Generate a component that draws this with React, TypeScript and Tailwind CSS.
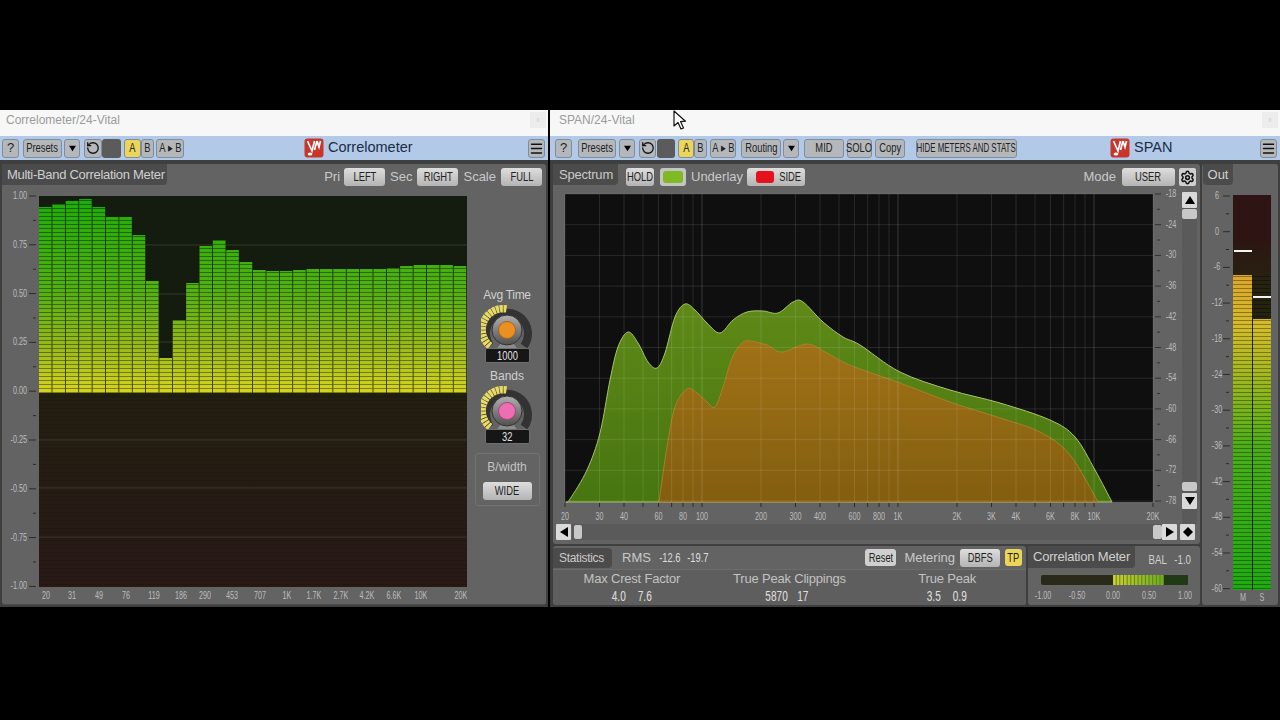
import React from "react";
import { Menu, RotateCcw, Settings } from "lucide-react";

// condensed label, the plugin font is much narrower than Arial
const Narrow = ({ children }: { children: React.ReactNode }) => (
  <span className="inline-block scale-x-[0.72] whitespace-nowrap">{children}</span>
);

const Tri = ({ dir = "down", size = 8 }: { dir?: "down" | "up" | "left" | "right" | "diamond"; size?: number }) => {
  const pts = {
    down: "0,1 10,1 5,9",
    up: "0,9 10,9 5,1",
    left: "9,0 9,10 1,5",
    right: "1,0 1,10 9,5",
    diamond: "5,0 10,5 5,10 0,5",
  }[dir];
  return (
    <svg width={size} height={size} viewBox="0 0 10 10">
      <polygon points={pts} fill="#000" />
    </svg>
  );
};

const ToolBtn = ({ w, label, on, mr = 0 }: { w: number; label?: React.ReactNode; on?: boolean; mr?: number }) => (
  <div
    style={{ width: w, marginRight: mr }}
    className={`h-[19px] shrink-0 rounded-[3px] border border-[#7d8c9e] flex items-center justify-center text-[13px] text-[#222] ${on ? "bg-[#ecd65a]" : "bg-[#b5b8bb]"}`}
  >
    {label}
  </div>
);

const PanelBtn = ({ w, label }: { w: number; label: string }) => (
  <div
    style={{ width: w }}
    className="h-[18px] shrink-0 rounded-[3px] bg-gradient-to-b from-[#dedede] to-[#b4b4b4] flex items-center justify-center text-[13px] text-[#222]"
  >
    <Narrow>{label}</Narrow>
  </div>
);

const TitleBar = ({ title, pad, children }: { title: string; pad: string; children?: React.ReactNode }) => (
  <div className={`relative h-[26px] bg-[#f7f7f7] flex items-start pt-[2px] pr-[2px] justify-between ${pad}`}>
    <span className="text-[12px] leading-[16px] text-[#9b9b9b]">{title}</span>
    <div className="w-[16px] h-[16px] bg-[#ececec] flex items-center justify-center text-[7px] text-[#ccc]">x</div>
    {children}
  </div>
);

const Logo = () => (
  <svg width="20" height="20" viewBox="0 0 20 20">
    <rect x="0.5" y="0.5" width="19" height="19" rx="3" fill="#c8352b" />
    <path d="M3.5 3 L8 13 L10.5 3 M13 3 L15 9 L16.5 3 M13 3 L10.5 12" stroke="#fff" strokeWidth="1.7" fill="none" />
    <ellipse cx="6" cy="16" rx="2.4" ry="1.6" fill="#fff" />
  </svg>
);

const Hamburger = () => (
  <div className="w-[17px] h-[19px] rounded-[3px] bg-[#b5b8bb] border border-[#7d8c9e] flex items-center justify-center">
    <Menu size={15} color="#111" strokeWidth={2.4} />
  </div>
);

const Label = ({ x, y, children, size = 10, anchor = "middle", fill = "#bdbdbd" }: {
  x: number; y: number; children: React.ReactNode; size?: number; anchor?: "middle" | "end" | "start"; fill?: string;
}) => (
  <text transform={`translate(${x} ${y}) scale(0.72 1)`} fontSize={size} textAnchor={anchor} fill={fill}>
    {children}
  </text>
);

/* ---------- Correlometer ---------- */

const BAND_TOPS = [
  207, 204, 201, 199, 207, 217, 217, 235, 281, 358, 320, 283, 246, 240, 250, 262, 270, 271, 271, 270, 269, 269, 269,
  269, 269, 269, 268, 266, 265, 265, 265, 266,
];
const LEFT_TICKS = ["1.00", "0.75", "0.50", "0.25", "0.00", "-0.25", "-0.50", "-0.75", "-1.00"];
const LEFT_FREQS: [string, number][] = [
  ["20", 46], ["31", 72], ["49", 99], ["76", 126], ["119", 154], ["186", 181], ["290", 205], ["453", 232],
  ["707", 260], ["1K", 287], ["1.7K", 314], ["2.7K", 341], ["4.2K", 367], ["6.6K", 394], ["10K", 421], ["20K", 461],
];

const CorrelationChart = () => (
  <svg width="472" height="415" viewBox="2 190 472 415" className="shrink-0">
    <defs>
      <linearGradient id="bars" gradientUnits="userSpaceOnUse" x1="0" y1="196" x2="0" y2="391">
        <stop offset="0" stopColor="#1cab08" />
        <stop offset="0.5" stopColor="#55b012" />
        <stop offset="0.78" stopColor="#9aba1a" />
        <stop offset="1" stopColor="#d4d41e" />
      </linearGradient>
      <linearGradient id="lower" x1="0" y1="0" x2="0" y2="1">
        <stop offset="0" stopColor="#231f10" />
        <stop offset="1" stopColor="#281917" />
      </linearGradient>
      <pattern id="stripes" width="4" height="4" patternUnits="userSpaceOnUse">
        <rect width="4" height="1" fill="#000" opacity="0.4" />
      </pattern>
    </defs>
    <rect x="39" y="196" width="428" height="195" fill="#141b0f" />
    <rect x="39" y="391" width="428" height="196" fill="url(#lower)" />
    <rect x="39" y="391" width="428" height="196" fill="url(#stripes)" opacity="0.3" />
    {[245, 294, 342, 440, 488, 537].map((y) => (
      <line key={y} x1="39" x2="467" y1={y} y2={y} stroke="#5c5c44" strokeWidth="1" opacity="0.45" />
    ))}
    {BAND_TOPS.map((top, i) => (
      <rect key={i} x={39 + i * 13.375} y={top} width="12.6" height={393 - top} fill="url(#bars)" />
    ))}
    {BAND_TOPS.map((top, i) => (
      <rect key={i} x={39 + i * 13.375} y={top} width="12.6" height={393 - top} fill="url(#stripes)" />
    ))}
    {LEFT_TICKS.map((t, i) => {
      const y = 196 + i * 48.8;
      return (
        <g key={t}>
          <Label x={27} y={y + 3} size={10} anchor="end">{t}</Label>
          <line x1="29" x2="36" y1={y} y2={y} stroke="#2c2c2c" />
          {i < 8 && <line x1="33" x2="36" y1={y + 24.4} y2={y + 24.4} stroke="#2c2c2c" />}
        </g>
      );
    })}
    {LEFT_FREQS.map(([t, x]) => (
      <Label key={t} x={x} y={599} size={10}>{t}</Label>
    ))}
  </svg>
);

const Knob = ({ color, edge }: { color: string; edge: string }) => (
  <svg width="52" height="50" viewBox="0 -4 52 50">
    <defs>
      <linearGradient id={`metal${edge}`} x1="0" y1="0" x2="0" y2="1">
        <stop offset="0" stopColor="#b0b0b0" />
        <stop offset="1" stopColor="#505050" />
      </linearGradient>
    </defs>
    <path d="M9 41 A21 21 0 1 1 43 41" fill="none" stroke="#333" strokeWidth="8" />
    <path d="M9 41 A21 21 0 0 1 26 4" fill="none" stroke="#e9da62" strokeWidth="7.5" strokeDasharray="3 0.7" />
    <path d="M14 46 L20 38 L32 38 L38 46 Z" fill="#8c8c8c" />
    <circle cx="26" cy="25" r="15" fill={`url(#metal${edge})`} stroke="#333" />
    <circle cx="26" cy="25" r="8.5" fill={color} stroke={edge} />
  </svg>
);

const ValueBox = ({ value }: { value: string }) => (
  <div className="w-[45px] h-[15px] shrink-0 rounded-[2px] bg-[#161616] border border-[#6e6e6e] flex items-center justify-center text-[13px] text-[#e2e2e2]">
    <Narrow>{value}</Narrow>
  </div>
);

const Correlometer = () => (
  <div className="w-[548px] shrink-0">
    <TitleBar title="Correlometer/24-Vital" pad="pl-[6px]" />
    <div className="h-[24px] bg-[#b2cae8] flex items-center pl-[2px] pr-[3px] relative">
      <ToolBtn w={17} label="?" mr={4} />
      <ToolBtn w={39} label={<Narrow>Presets</Narrow>} mr={2} />
      <ToolBtn w={16} label={<Tri size={7} />} mr={4} />
      <ToolBtn w={18} label={<RotateCcw size={14} color="#111" strokeWidth={2.2} />} />
      <div className="w-[19px] h-[19px] bg-[#5b5b5b] rounded-[3px] mr-[3px]" />
      <ToolBtn w={17} label={<Narrow>A</Narrow>} on />
      <ToolBtn w={13} label={<Narrow>B</Narrow>} mr={2} />
      <ToolBtn w={28} label={<Narrow>A ▸ B</Narrow>} />
      <div className="flex items-center gap-[4px] ml-[120px]">
        <Logo />
        <span className="text-[14.5px] text-[#1a2c46]">Correlometer</span>
      </div>
      <div className="ml-auto">
        <Hamburger />
      </div>
    </div>
    <div className="h-[447px] bg-[#3f3f3f] pt-[4px] px-[2px] pb-[2px]">
      <div className="h-full bg-[#636363] rounded-[3px] border-b border-[#4c4c4c]">
        <div className="h-[26px] flex items-center text-[13px] text-[#c9c9c9]">
          <div className="w-[165px] h-[21px] self-start bg-[#4b4b4b] rounded-br-[4px] flex items-center pl-[5px] text-[#cfcfcf] tracking-[-0.3px]">
            Multi-Band Correlation Meter
          </div>
          <div className="ml-auto flex items-center pr-[4px]">
            <span className="mr-[4px]">Pri</span>
            <PanelBtn w={41} label="LEFT" />
            <span className="mx-[5px]">Sec</span>
            <PanelBtn w={41} label="RIGHT" />
            <span className="mx-[5px]">Scale</span>
            <PanelBtn w={41} label="FULL" />
          </div>
        </div>
        <div className="flex">
          <CorrelationChart />
          <div className="flex-1 flex flex-col items-center pt-[98px] pr-[6px] text-[12px] text-[#d0d0d0]">
            <span className="leading-[14px] tracking-[-0.3px]">Avg Time</span>
            <div className="-mt-[1px] -mb-[3px] h-[50px]">
              <Knob color="#ea8f22" edge="#a86414" />
            </div>
            <ValueBox value="1000" />
            <span className="leading-[14px] mt-[6px]">Bands</span>
            <div className="-mt-[1px] -mb-[3px] h-[50px]">
              <Knob color="#ee6eb4" edge="#a8447c" />
            </div>
            <ValueBox value="32" />
            <div className="mt-[9px] w-[65px] h-[53px] rounded-[3px] border border-[#727272] flex flex-col items-center pt-[6px] text-[#c4c4c4]">
              <span className="leading-[14px] mb-[8px]">B/width</span>
              <PanelBtn w={49} label="WIDE" />
            </div>
          </div>
        </div>
      </div>
    </div>
  </div>
);

/* ---------- SPAN ---------- */

const GREEN_CURVE: [number, number][] = [
  [566, 502], [570, 499], [587, 470], [600, 433], [610, 380], [618, 347], [628, 332], [638, 343], [648, 362],
  [657, 368], [665, 353], [675, 317], [685, 304], [695, 310], [707, 323], [720, 333], [733, 320], [747, 312],
  [763, 311], [778, 313], [793, 302], [803, 302], [823, 322], [843, 337], [860, 345], [900, 372], [950, 390],
  [1000, 403], [1050, 420], [1075, 437], [1095, 470], [1112, 502],
];
const ORANGE_CURVE: [number, number][] = [
  [659, 502], [667, 447], [675, 407], [687, 389], [697, 393], [707, 402], [715, 407], [723, 387], [732, 358],
  [742, 343], [750, 341], [767, 345], [782, 352], [807, 344], [827, 353], [843, 362], [860, 369], [900, 383],
  [950, 402], [1000, 418], [1040, 432], [1070, 455], [1098, 502],
];

// catmull-rom through the measured points
const smooth = (p: [number, number][]) => {
  let d = `M${p[0][0]} ${p[0][1]}`;
  for (let i = 0; i < p.length - 1; i++) {
    const a = p[Math.max(i - 1, 0)];
    const b = p[i];
    const c = p[i + 1];
    const e = p[Math.min(i + 2, p.length - 1)];
    d += ` C${b[0] + (c[0] - a[0]) / 6} ${b[1] + (c[1] - a[1]) / 6} ${c[0] - (e[0] - b[0]) / 6} ${c[1] - (e[1] - b[1]) / 6} ${c[0]} ${c[1]}`;
  }
  return d;
};

const freqX = (f: number) => 565 + 196 * Math.log10(f / 20);
const GRID_FREQS = [
  20, 30, 40, 50, 60, 70, 80, 90, 100, 200, 300, 400, 500, 600, 700, 800, 900, 1000, 2000, 3000, 4000, 5000, 6000,
  7000, 8000, 9000, 10000, 20000,
];
const FREQ_LABELS: [string, number][] = [
  ["20", 20], ["30", 30], ["40", 40], ["60", 60], ["80", 80], ["100", 100], ["200", 200], ["300", 300], ["400", 400],
  ["600", 600], ["800", 800], ["1K", 1000], ["2K", 2000], ["3K", 3000], ["4K", 4000], ["6K", 6000], ["8K", 8000],
  ["10K", 10000], ["20K", 20000],
];
const DB_LABELS = ["-18", "-24", "-30", "-36", "-42", "-48", "-54", "-60", "-66", "-72", "-78"];

const SpectrumChart = () => (
  <svg width="626" height="336" viewBox="553 187 626 336" className="shrink-0 -mt-[3px]">
    <defs>
      <linearGradient id="gf" gradientUnits="userSpaceOnUse" x1="0" y1="300" x2="0" y2="502">
        <stop offset="0" stopColor="#5f8a18" />
        <stop offset="1" stopColor="#477510" />
      </linearGradient>
      <linearGradient id="of" gradientUnits="userSpaceOnUse" x1="0" y1="340" x2="0" y2="502">
        <stop offset="0" stopColor="#a07216" />
        <stop offset="1" stopColor="#835e10" />
      </linearGradient>
    </defs>
    <rect x="565" y="194" width="588" height="308" fill="#0f0f0f" />
    <path d={`${smooth(GREEN_CURVE)} Z`} fill="url(#gf)" stroke="#a9c26a" strokeWidth="1" />
    <path d={`${smooth(ORANGE_CURVE)} Z`} fill="url(#of)" stroke="#b08430" strokeWidth="0.8" />
    {GRID_FREQS.map((f) => (
      <line key={f} x1={freqX(f)} x2={freqX(f)} y1="194" y2="502" stroke="#fff" strokeWidth="1" opacity={f === 100 || f === 1000 || f === 10000 ? 0.16 : 0.1} />
    ))}
    {DB_LABELS.map((t, i) => {
      const y = 194 + i * 30.7;
      return (
        <g key={t}>
          <line x1="565" x2="1153" y1={y} y2={y} stroke="#fff" opacity="0.1" />
          <line x1="1155" x2="1161" y1={y} y2={y} stroke="#333" />
          {i < 10 && <line x1="1157" x2="1160" y1={y + 15.3} y2={y + 15.3} stroke="#333" />}
          <Label x={1171} y={y + 3} size={10}>{t}</Label>
        </g>
      );
    })}
    {GRID_FREQS.map((f) => (
      <line key={f} x1={freqX(f)} x2={freqX(f)} y1="503" y2="507" stroke="#2c2c2c" />
    ))}
    {FREQ_LABELS.map(([t, f]) => (
      <Label key={t} x={freqX(f)} y={520} size={10}>{t}</Label>
    ))}
  </svg>
);

const ScrollBtn = ({ dir }: { dir: "up" | "down" | "left" | "right" | "diamond" }) => (
  <div className="w-[15px] h-[16px] shrink-0 bg-[#d9d9d9] rounded-[1px] flex items-center justify-center">
    <Tri dir={dir} size={10} />
  </div>
);

const OUT_TICKS = ["6", "0", "-6", "-12", "-18", "-24", "-30", "-36", "-42", "-48", "-54", "-60"];

const OutMeter = () => (
  <svg width="76" height="415" viewBox="1202 189 76 415">
    <defs>
      <linearGradient id="outbg" x1="0" y1="0" x2="0" y2="1">
        <stop offset="0" stopColor="#2e1412" />
        <stop offset="0.1" stopColor="#2e1412" />
        <stop offset="0.22" stopColor="#262210" />
        <stop offset="1" stopColor="#1a2410" />
      </linearGradient>
      <linearGradient id="outfill" gradientUnits="userSpaceOnUse" x1="0" y1="275" x2="0" y2="590">
        <stop offset="0" stopColor="#dca52c" />
        <stop offset="0.16" stopColor="#d4bc2a" />
        <stop offset="0.3" stopColor="#a9b81e" />
        <stop offset="0.55" stopColor="#4aae16" />
        <stop offset="1" stopColor="#20aa10" />
      </linearGradient>
      <pattern id="outstripes" width="4" height="4" patternUnits="userSpaceOnUse">
        <rect width="4" height="1" fill="#000" opacity="0.35" />
      </pattern>
    </defs>
    <rect x="1233" y="195" width="38" height="395" fill="url(#outbg)" />
    <rect x="1233" y="275" width="19" height="315" fill="url(#outfill)" />
    <rect x="1253" y="319" width="18" height="271" fill="url(#outfill)" />
    <rect x="1233" y="275" width="38" height="315" fill="url(#outstripes)" />
    <rect x="1234" y="250" width="18" height="2" fill="#f4f4f4" />
    <rect x="1253" y="296" width="18" height="2" fill="#f4f4f4" />
    {OUT_TICKS.map((t, i) => {
      const y = 196 + i * 35.7;
      return (
        <g key={t}>
          <Label x={1217} y={y + 3} size={10}>{t}</Label>
          <line x1="1223" x2="1230" y1={y} y2={y} stroke="#2c2c2c" />
          {i < 11 && <line x1="1226" x2="1229" y1={y + 17.8} y2={y + 17.8} stroke="#2c2c2c" />}
        </g>
      );
    })}
    <Label x={1243} y={601} size={10}>M</Label>
    <Label x={1262} y={601} size={10}>S</Label>
  </svg>
);

const CorrelationBar = () => (
  <svg width="164" height="28" viewBox="1028 574 164 28" className="shrink-0">
    <defs>
      <linearGradient id="corr" gradientUnits="userSpaceOnUse" x1="1113" y1="0" x2="1164" y2="0">
        <stop offset="0" stopColor="#cfd030" />
        <stop offset="1" stopColor="#62ae20" />
      </linearGradient>
    </defs>
    <rect x="1041" y="575" width="147" height="10" rx="2" fill="#2a2a1a" />
    <rect x="1113" y="575" width="51" height="10" fill="#6a7a18" />
    {Array.from({ length: 14 }).map((_, i) => (
      <rect key={i} x={1113 + i * 3.65} y="575" width="2.7" height="10" fill="url(#corr)" />
    ))}
    <rect x="1164" y="575" width="24" height="10" rx="1" fill="#1f3a14" />
    {[["-1.00", 1043], ["-0.50", 1077], ["0.00", 1113], ["0.50", 1149], ["1.00", 1185]].map(([t, x]) => (
      <Label key={t as string} x={x as number} y={599} size={10}>{t}</Label>
    ))}
  </svg>
);

const Stat = ({ title, a, b }: { title: string; a: string; b: string }) => (
  <div className="flex flex-col items-center">
    <span className="text-[13px] leading-[16px] text-[#c2c2c2] tracking-[-0.2px]">{title}</span>
    <div className="flex justify-center gap-[10px] text-[14px] leading-[18px] text-[#e0e0e0]">
      <span className="w-[16px] flex justify-center"><Narrow>{a}</Narrow></span>
      <span className="w-[16px] flex justify-center"><Narrow>{b}</Narrow></span>
    </div>
  </div>
);

const Span = () => (
  <div className="w-[730px] shrink-0">
    <TitleBar title="SPAN/24-Vital" pad="pl-[9px]">
      <svg width="16" height="22" viewBox="0 0 16 22" className="absolute left-[122px] top-0">
        <path d="M2 1 L2 16 L6 12.5 L9 19 L11.5 18 L8.6 11.6 L13.5 11.2 Z" fill="#fff" stroke="#111" strokeWidth="1.2" strokeLinejoin="round" />
      </svg>
    </TitleBar>
    <div className="h-[24px] bg-[#b2cae8] flex items-center pl-[5px] pr-[3px]">
      <ToolBtn w={17} label="?" mr={6} />
      <ToolBtn w={38} label={<Narrow>Presets</Narrow>} mr={3} />
      <ToolBtn w={16} label={<Tri size={7} />} mr={4} />
      <ToolBtn w={17} label={<RotateCcw size={14} color="#111" strokeWidth={2.2} />} mr={1} />
      <div className="w-[18px] h-[19px] bg-[#5b5b5b] rounded-[3px] mr-[3px]" />
      <ToolBtn w={16} label={<Narrow>A</Narrow>} on />
      <ToolBtn w={13} label={<Narrow>B</Narrow>} mr={3} />
      <ToolBtn w={26} label={<Narrow>A ▸ B</Narrow>} mr={5} />
      <ToolBtn w={40} label={<Narrow>Routing</Narrow>} mr={2} />
      <ToolBtn w={16} label={<Tri size={7} />} mr={5} />
      <ToolBtn w={40} label={<Narrow>MID</Narrow>} mr={3} />
      <ToolBtn w={25} label={<Narrow>SOLO</Narrow>} mr={3} />
      <ToolBtn w={30} label={<Narrow>Copy</Narrow>} mr={11} />
      <ToolBtn
        w={101}
        label={<span className="inline-block scale-x-[0.66] whitespace-nowrap text-[12px]">HIDE METERS AND STATS</span>}
      />
      <div className="flex items-center gap-[4px] ml-[93px]">
        <Logo />
        <span className="text-[14.5px] text-[#1a2c46]">SPAN</span>
      </div>
      <div className="ml-auto">
        <Hamburger />
      </div>
    </div>
    <div className="h-[447px] bg-[#3f3f3f] pt-[4px] pb-[2px] pl-[3px] pr-[2px] flex gap-[2px]">
      <div className="w-[647px] shrink-0 flex flex-col gap-[2px]">
        {/* spectrum panel */}
        <div className="h-[380px] bg-[#636363] rounded-[3px]">
          <div className="h-[26px] flex items-center text-[13px] text-[#c9c9c9]">
            <div className="w-[65px] h-[21px] self-start bg-[#4b4b4b] rounded-br-[4px] flex items-center pl-[6px] mr-[8px] tracking-[-0.2px]">
              Spectrum
            </div>
            <PanelBtn w={28} label="HOLD" />
            <div className="w-[26px] h-[18px] ml-[6px] rounded-[3px] bg-[#c4c4c4] flex items-center justify-center">
              <div className="w-[20px] h-[12px] rounded-[3px] bg-[#7fba22]" />
            </div>
            <span className="ml-[5px] mr-[4px]">Underlay</span>
            <div className="w-[58px] h-[18px] rounded-[3px] bg-gradient-to-b from-[#dedede] to-[#b4b4b4] flex items-center pl-[9px] gap-[1px] text-[13px] text-[#222]">
              <div className="w-[19px] h-[12px] rounded-[3px] bg-[#e5121e]" />
              <Narrow>SIDE</Narrow>
            </div>
            <span className="ml-auto mr-[6px]">Mode</span>
            <PanelBtn w={53} label="USER" />
            <div className="w-[17px] h-[18px] ml-[4px] mr-[4px] rounded-[2px] bg-[#cfcfcf] flex items-center justify-center">
              <Settings size={15} color="#111" strokeWidth={2.4} />
            </div>
          </div>
          <div className="flex">
            <SpectrumChart />
            <div className="w-[15px] ml-[3px] h-[332px] mt-[2px] flex flex-col bg-[#5a5a5a]">
              <ScrollBtn dir="up" />
              <div className="h-[10px] w-[15px] bg-[#c8c8c8] rounded-[2px] mt-[1px]" />
              <div className="flex-1" />
              <div className="h-[9px] w-[15px] bg-[#c8c8c8] rounded-[2px]" />
              <div className="mt-[2px] mb-[15px]">
                <ScrollBtn dir="down" />
              </div>
            </div>
          </div>
          <div className="flex items-center pl-[3px]">
            <ScrollBtn dir="left" />
            <div className="w-[590px] h-[16px] ml-[1px] bg-[#5a5a5a] flex items-center justify-between pl-[2px]">
              <div className="w-[8px] h-[14px] bg-[#c8c8c8] rounded-[2px]" />
              <div className="w-[9px] h-[14px] bg-[#c8c8c8] rounded-[2px]" />
            </div>
            <ScrollBtn dir="right" />
            <div className="ml-[3px]">
              <ScrollBtn dir="diamond" />
            </div>
          </div>
        </div>
        {/* stats row */}
        <div className="flex-1 flex gap-[2px]">
          <div className="w-[473px] shrink-0 bg-[#636363] rounded-[3px] flex flex-col">
            <div className="h-[23px] flex items-center text-[13px] text-[#c9c9c9]">
              <div className="w-[59px] h-[20px] self-start mt-[2px] bg-[#4b4b4b] rounded-r-[4px] flex items-center pl-[6px] mr-[10px] tracking-[-0.3px] text-[12px]">
                Statistics
              </div>
              <span className="mr-[4px]">RMS</span>
              <span className="w-[28px] text-[13px] text-[#ddd]"><Narrow>-12.6</Narrow></span>
              <span className="text-[13px] text-[#ddd]"><Narrow>-19.7</Narrow></span>
              <div className="ml-auto flex items-center pr-[4px]">
                <div className="w-[31px] h-[17px] rounded-[3px] bg-[#d0d0d0] flex items-center justify-center text-[13px] text-[#222]">
                  <Narrow>Reset</Narrow>
                </div>
                <span className="ml-[8px] mr-[5px]">Metering</span>
                <PanelBtn w={40} label="DBFS" />
                <div className="w-[17px] h-[17px] ml-[5px] rounded-[3px] bg-[#ecd65a] flex items-center justify-center text-[13px] text-[#222]">
                  <Narrow>TP</Narrow>
                </div>
              </div>
            </div>
            <div className="flex-1 grid grid-cols-3 bg-[#5e5e5e] border-t border-[#6c6c6c] rounded-b-[3px] pt-[1px]">
              <Stat title="Max Crest Factor" a="4.0" b="7.6" />
              <Stat title="True Peak Clippings" a="5870" b="17" />
              <Stat title="True Peak" a="3.5" b="0.9" />
            </div>
          </div>
          <div className="flex-1 bg-[#636363] rounded-[3px] flex flex-col">
            <div className="h-[28px] shrink-0 flex items-center text-[#d0d0d0]">
              <div className="w-[107px] h-[22px] self-start bg-[#4b4b4b] rounded-br-[4px] flex items-center justify-center text-[13px] tracking-[-0.2px]">
                Correlation Meter
              </div>
              <span className="ml-[10px] text-[13.5px]"><Narrow>BAL</Narrow></span>
              <span className="text-[13.5px]"><Narrow>-1.0</Narrow></span>
            </div>
            <CorrelationBar />
          </div>
        </div>
      </div>
      <div className="flex-1 bg-[#636363] rounded-[3px]">
        <div className="h-[21px] w-[30px] ml-[1px] bg-[#4b4b4b] rounded-b-[4px] flex items-center justify-center text-[13px] text-[#d0d0d0]">
          Out
        </div>
        <div className="mt-[4px]">
          <OutMeter />
        </div>
      </div>
    </div>
  </div>
);

export default function App() {
  return (
    <div className="w-[1280px] h-[720px] bg-black overflow-hidden pt-[110px] flex gap-[2px] font-['Liberation_Sans',sans-serif]">
      <Correlometer />
      <Span />
    </div>
  );
}
